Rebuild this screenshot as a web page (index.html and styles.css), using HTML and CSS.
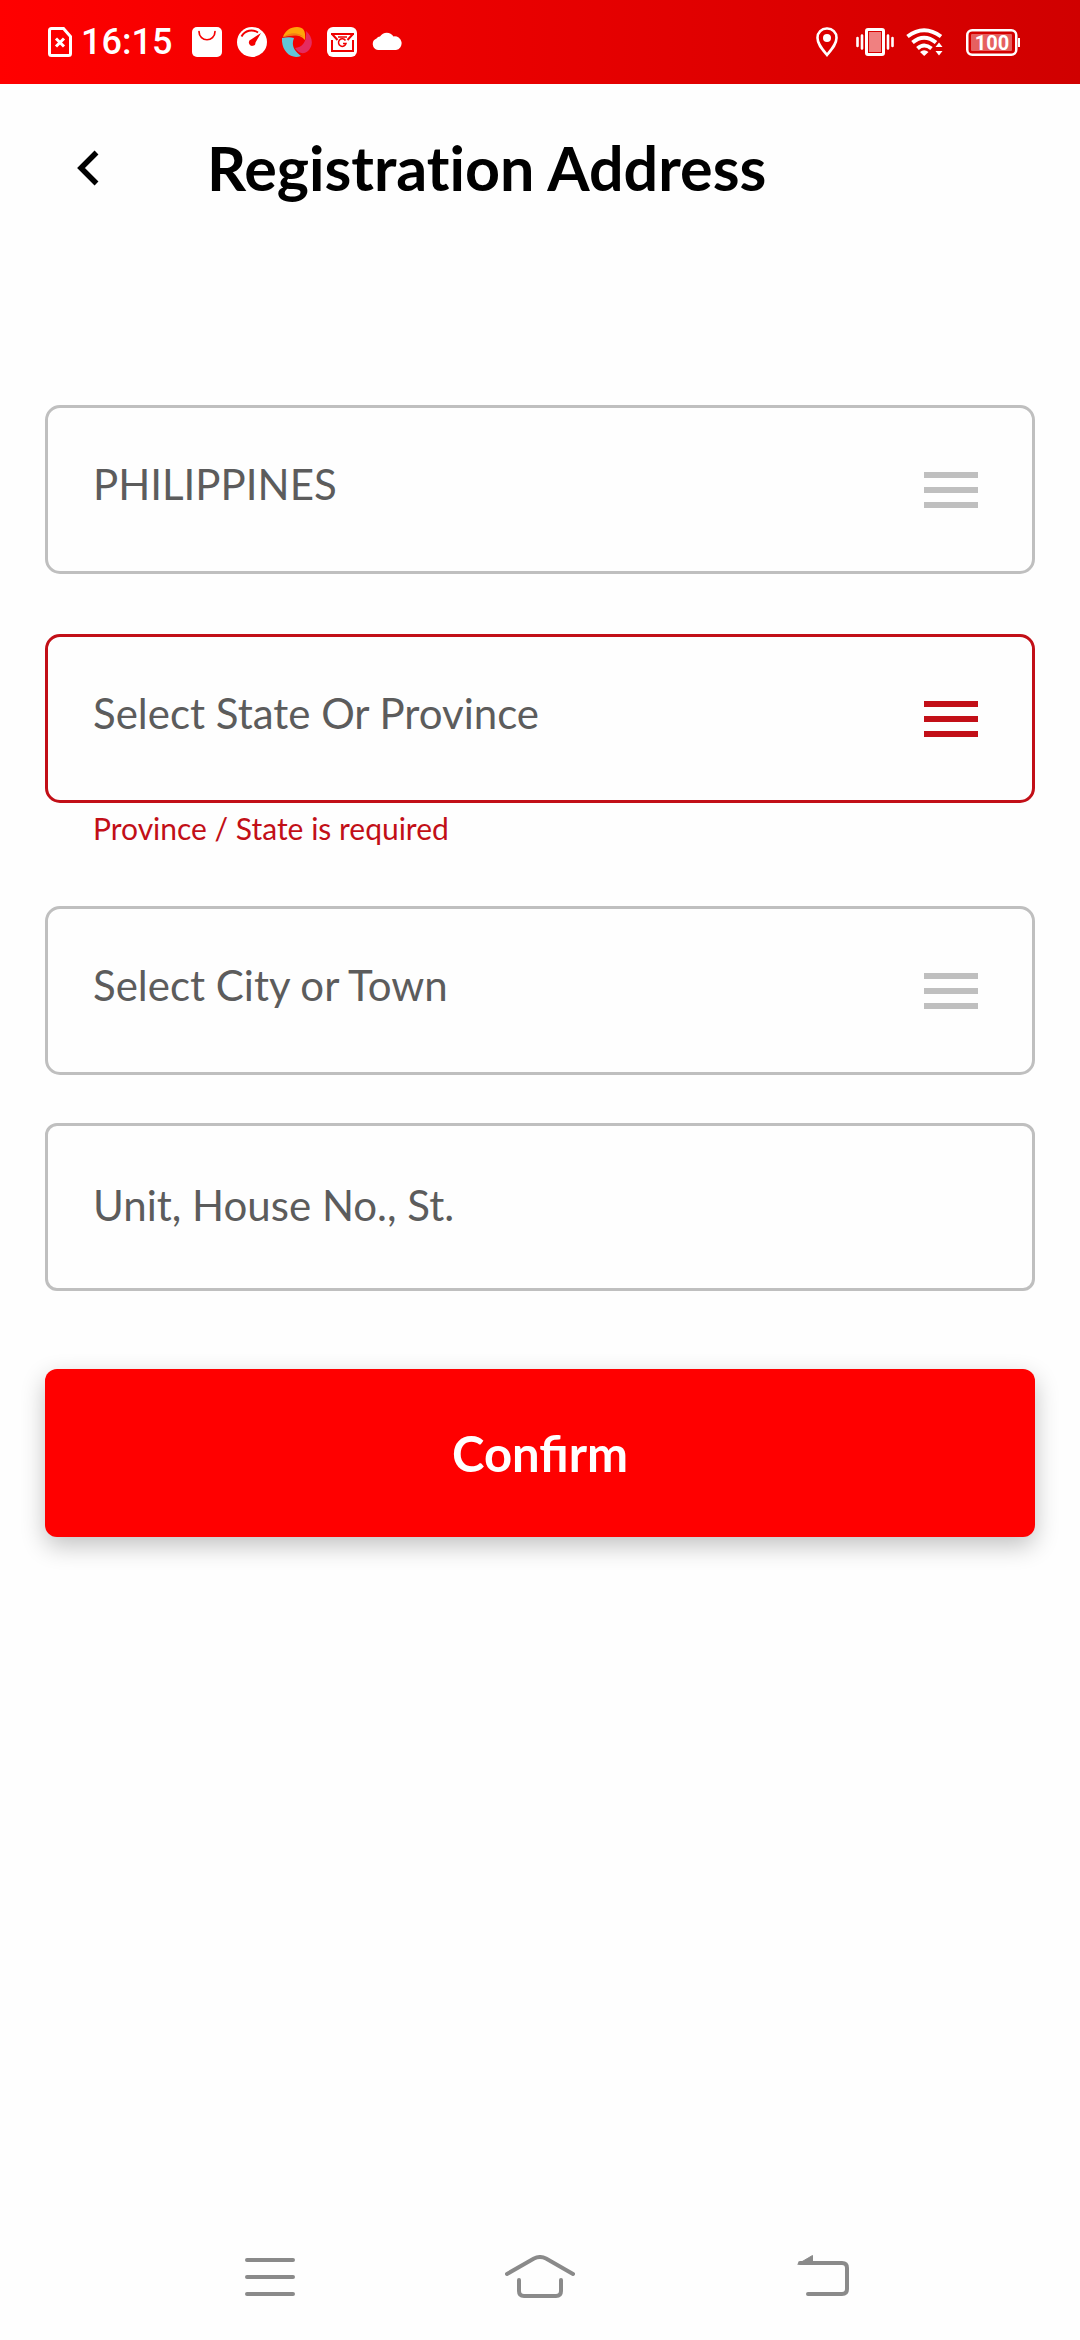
FILE: index.html
```html
<!DOCTYPE html>
<html lang="en">
<head>
<meta charset="utf-8">
<meta name="viewport" content="width=device-width, initial-scale=1">
<title>Registration Address</title>
<link rel="stylesheet" href="styles.css">
</head>
<body>
<div class="status-bar">
  <div class="status-left">
    <svg class="sim" width="24" height="30" viewBox="0 0 24 30" fill="none" stroke="#fff" stroke-width="3"><path d="M3.500 1.500H15.500L22.500 9.500V26.500Q22.500 28.500 20.500 28.500H3.500Q1.500 28.500 1.500 26.500V3.500Q1.500 1.500 3.500 1.500Z"/><path d="M8 11.500L16 19.500M16 11.500L8 19.500"/></svg>
    <time class="clock">16:15</time>
    <svg width="30" height="30" viewBox="0 0 30 30"><rect width="30" height="30" rx="5" fill="#fff"/><path d="M7 4.500C7 15.500 23 15.500 23 4.500" fill="none" stroke="#f60000" stroke-width="1.700" stroke-linecap="round"/></svg>
    <svg width="30" height="30" viewBox="0 0 30 30"><circle cx="15" cy="15" r="15" fill="#fff"/><path d="M4.500 9.500C8 3 15.500 2 21 5.500" fill="none" stroke="#f40000" stroke-width="2"/><path d="M24 6L18.500 15.500A3.300 3.300 0 1 1 14 12.500Z" fill="#f40000"/></svg>
    <svg width="30" height="30" viewBox="0 0 30 30"><path d="M1 10C3 4 8 0 15 0C21 0 24 3 23 13C18 7 10 7 1 10Z" fill="#ffa40a"/><path d="M24 4C30 9 32 17 27 23C22 28 17 27 13 21C21 20 25 14 24 4Z" fill="#e52b60"/><path d="M0 11C5 10 9 10 12 11C9 18 12 24 19 29C9 33-1 24 0 11Z" fill="#62c5d9"/><path d="M1 10C9 5 15 5 22 10C14 7 8 9 1 10Z" fill="#f47b15"/></svg>
    <svg width="30" height="30" viewBox="0 0 30 30"><rect width="30" height="30" rx="6" fill="#fff"/><g fill="none" stroke="#ef0000"><path d="M5 13V24H26V13" stroke-width="2"/><path d="M4 7H27M5 7L10.500 13M26 7L20.500 13" stroke-width="2"/><path d="M11 10H20" stroke-width="1.500"/><path d="M18.500 13.500A3.800 3.800 0 1 0 19 16.500H16" stroke-width="1.500"/></g></svg>
    <svg width="30" height="30" viewBox="0 0 30 30"><path d="M6 23A6 6 0 0 1 4.500 11.500A5 5 0 0 1 8 9.500A8 8 0 0 1 21.500 9.500A6.800 6.800 0 0 1 24 23Z" fill="#fff"/></svg>
  </div>
  <div class="status-right">
    <svg width="22" height="30" viewBox="0 0 22 30"><path d="M11 1.500A9.200 9.200 0 0 0 1.500 11C1.500 17 6 22 11 28C16 22 20.500 17 20.500 11A9.200 9.200 0 0 0 11 1.500Z" fill="none" stroke="#fff" stroke-width="2.600"/><circle cx="11" cy="11" r="4" fill="#fff"/></svg>
    <svg class="vibrate" width="38" height="28" viewBox="0 0 38 28"><rect x="13" y="4" width="12" height="20" fill="#f08080"/><rect x="10.500" y="1.500" width="17" height="25" rx="1.500" fill="none" stroke="#fff" stroke-width="3"/><path d="M1.500 10V18M6 7.500V20.500M32 7.500V20.500M36.500 10V18" stroke="#fff" stroke-width="2.600" stroke-linecap="round"/></svg>
    <svg class="wifi" width="38" height="28" viewBox="0 0 38 28"><g fill="none" stroke="#fff" stroke-width="4"><path d="M1.500 8.500Q18 -4 35 8.500"/><path d="M6.500 14.500Q18 5 30 14.500"/><path d="M11.500 20.500Q18 14.500 25.500 20.500"/></g><path d="M14 24Q18 20.500 22.500 24L18.200 28ZM29.500 19L33 14.500L36.500 19ZM29.500 23L33 27.500L36.500 23Z" fill="#fff"/></svg>
    <svg class="battery" width="54" height="27" viewBox="0 0 54 27"><rect x="5" y="5" width="41" height="17" rx="1" fill="#e66060"/><rect x="1.250" y="1.250" width="49" height="24.500" rx="5" fill="none" stroke="#fff" stroke-width="2.500"/><path d="M53 9V18" stroke="#fff" stroke-width="2"/><text x="26" y="20.500" text-anchor="middle" class="battery-level">100</text></svg>
  </div>
</div>

<header class="app-header">
  <button class="back" type="button" aria-label="Back"><svg width="22" height="36" viewBox="0 0 22 36"><path d="M19.500 2.500L4 18L19.500 33.500" fill="none" stroke="#000" stroke-width="5.500"/></svg></button>
  <h1 class="title">Registration Address</h1>
</header>

<main class="content">
  <form class="address-form">
    <div class="field">
      <select class="control picker" aria-label="Country"><option>PHILIPPINES</option></select>
      <svg class="menu-icon" width="54" height="36" viewBox="0 0 54 36" fill="currentColor"><path d="M0 0H54V6H0ZM0 15H54V21H0ZM0 30H54V36H0Z"/></svg>
    </div>
    <div class="field invalid">
      <select class="control picker" aria-label="State or province" aria-invalid="true" aria-describedby="state-error"><option>Select State Or Province</option></select>
      <svg class="menu-icon" width="54" height="36" viewBox="0 0 54 36" fill="currentColor"><path d="M0 0H54V6H0ZM0 15H54V21H0ZM0 30H54V36H0Z"/></svg>
    </div>
    <p class="error" id="state-error">Province / State is required</p>
    <div class="field">
      <select class="control picker" aria-label="City or town"><option>Select City or Town</option></select>
      <svg class="menu-icon" width="54" height="36" viewBox="0 0 54 36" fill="currentColor"><path d="M0 0H54V6H0ZM0 15H54V21H0ZM0 30H54V36H0Z"/></svg>
    </div>
    <input class="control street" type="text" aria-label="Street address" placeholder="Unit, House No., St.">
    <button class="confirm" type="submit">Confirm</button>
  </form>
</main>

<nav class="system-nav" aria-label="System navigation">
  <button class="nav-button" type="button" aria-label="Recent apps"><svg width="70" height="44" viewBox="0 0 70 44"><path d="M12 5H58M12 22H58M12 39H58"/></svg></button>
  <button class="nav-button" type="button" aria-label="Home"><svg width="70" height="44" viewBox="0 0 70 44"><path d="M2 19L29 3.500Q35 .5 41 3.500L68 19M14 25V36Q14 41 19 41H51Q56 41 56 36V25"/></svg></button>
  <button class="nav-button" type="button" aria-label="Back"><svg width="96" height="44" viewBox="-26 0 96 44"><path d="M12 8H54Q59 8 59 13V34Q59 39 54 39H20"/><path class="arrow" d="M10 9L24.500 .5V9Z"/></svg></button>
</nav>
</body>
</html>
```
FILE: styles.css
```css
* {
  box-sizing: border-box;
}

body {
  margin: 0;
  min-height: 100vh;
  display: flex;
  flex-direction: column;
  background: #fefefe;
  color: #000;
  font-family: Lato, "Noto Sans", sans-serif;
}

button {
  border: 0;
  padding: 0;
  background: none;
  font-family: inherit;
}

svg {
  display: block;
  flex: none;
}

.status-bar {
  height: 84px;
  padding: 0 60px 0 48px;
  display: flex;
  align-items: center;
  justify-content: space-between;
  background: linear-gradient(to right, #ff0000, #d00000);
  color: #fff;
}

.status-left,
.status-right {
  display: flex;
  align-items: center;
}

.status-left {
  gap: 15px;
}

.sim {
  margin-right: -6px;
}

.clock {
  width: 96px;
  font: 500 36px/44px Roboto, sans-serif;
}

.status-right {
  gap: 18px;
}

.wifi {
  margin-left: -6px;
}

.battery {
  margin-left: 4px;
}

.battery-level {
  fill: #fff;
  font: 700 20px Roboto, sans-serif;
}

.app-header {
  height: 168px;
  padding: 0 45px;
  display: flex;
  align-items: center;
  gap: 76px;
}

.back {
  width: 86px;
  height: 86px;
  display: flex;
  align-items: center;
  justify-content: center;
}

.title {
  margin: 0;
  font-size: 61px;
  line-height: 72px;
  font-weight: 700;
  font-variant-ligatures: none;
}

.content {
  flex: 1;
  padding: 153px 45px 60px;
}

.address-form {
  display: flex;
  flex-direction: column;
}

.field {
  display: grid;
  align-items: center;
  color: #bfbfbf;
}

.field + .field,
.error + .field {
  margin-top: 60px;
}

.control {
  width: 100%;
  height: 168px;
  margin: 0;
  padding: 0 45px 4px;
  border: 3px solid #bfbfbf;
  border-radius: 12px;
  background: transparent;
  color: #5c5c5c;
  font-family: inherit;
  font-size: 42px;
  line-height: 52px;
}

.control::placeholder {
  color: #5c5c5c;
  opacity: 1;
}

.picker {
  grid-area: 1 / 1;
  height: 169px;
  padding-bottom: 12px;
  border-radius: 15px;
  appearance: none;
}

.menu-icon {
  grid-area: 1 / 1;
  justify-self: end;
  margin-right: 57px;
  pointer-events: none;
}

.invalid {
  color: #c20f17;
}

.invalid .picker {
  border-color: #c20f17;
}

.error {
  margin: 7px 48px 0;
  color: #c20f17;
  font-size: 30px;
  line-height: 36px;
}

.street {
  margin-top: 48px;
}

.confirm {
  height: 168px;
  margin-top: 78px;
  border-radius: 12px;
  background: #ff0000;
  box-shadow: 0 9px 24px rgba(0, 0, 0, 0.24);
  color: #fff;
  font-size: 49px;
  line-height: 58px;
  font-weight: 700;
}

.system-nav {
  height: 126px;
  padding: 0 135px;
  display: grid;
  grid-template-columns: repeat(3, 1fr);
}

.nav-button {
  display: flex;
  align-items: center;
  justify-content: center;
}

.nav-button svg {
  fill: none;
  stroke: #8a8a8a;
  stroke-width: 4;
  stroke-linecap: round;
  stroke-linejoin: round;
}

.nav-button .arrow {
  fill: #8a8a8a;
  stroke-width: 1;
}
```
